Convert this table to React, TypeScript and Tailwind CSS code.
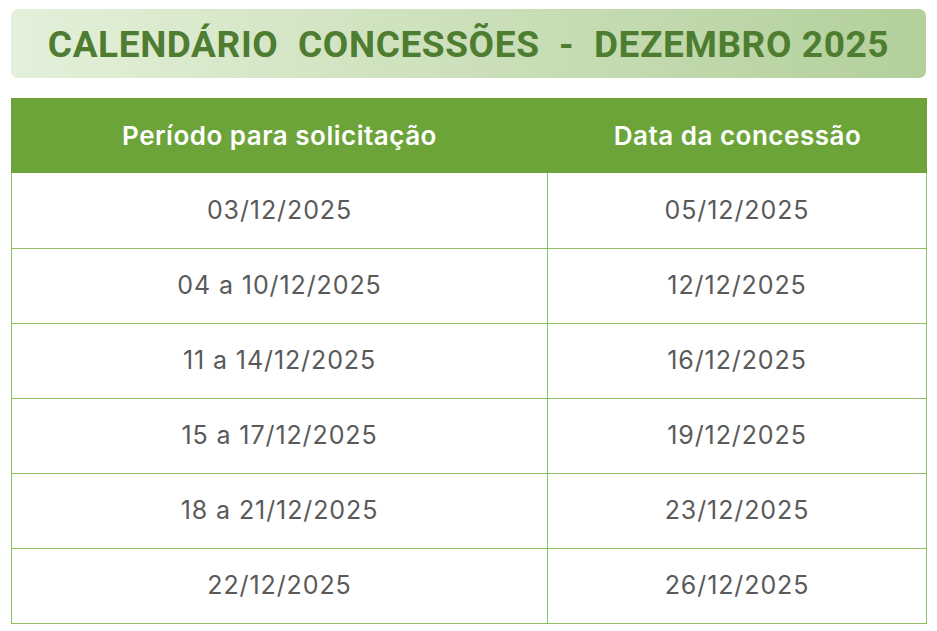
const rows: [string, string][] = [
  ['03/12/2025', '05/12/2025'],
  ['04 a 10/12/2025', '12/12/2025'],
  ['11 a 14/12/2025', '16/12/2025'],
  ['15 a 17/12/2025', '19/12/2025'],
  ['18 a 21/12/2025', '23/12/2025'],
  ['22/12/2025', '26/12/2025'],
]

export default function App() {
  return (
    <div className="w-[937px] h-[631px] bg-white pt-[9px] px-[11px]" style={{ fontFamily: 'Inter, "Noto Sans", sans-serif' }}>
      <div className="h-[69px] rounded-[7px] bg-gradient-to-r from-[#e4f0da] to-[#b3d09b] flex items-center justify-center pt-[2px]">
        <h1 className="text-[37px] font-bold text-[#4e7d31] tracking-[0.6px] whitespace-pre" style={{ fontFamily: 'Roboto, "Liberation Sans", sans-serif' }}>
          CALENDÁRIO  CONCESSÕES  -  DEZEMBRO 2025
        </h1>
      </div>
      <div className="mt-[20px] w-[916px]">
        <div className="grid grid-cols-[537px_1fr] h-[75px] bg-[#6ca43a] text-white text-[26px] font-semibold tracking-[0.5px]">
          <div className="flex items-center justify-center">Período para solicitação</div>
          <div className="flex items-center justify-center">Data da concessão</div>
        </div>
        <div className="border-x border-b border-[#8cc063]">
          {rows.map(([a, b], i) => (
            <div key={i} className={`grid grid-cols-[536px_1fr] h-[75px] text-[25px] text-[#5a5a5a] tracking-[0.9px] ${i > 0 ? 'border-t border-[#8cc063]' : ''}`}>
              <div className="flex items-center justify-center border-r border-[#8cc063]">{a}</div>
              <div className="flex items-center justify-center">{b}</div>
            </div>
          ))}
        </div>
      </div>
    </div>
  )
}
